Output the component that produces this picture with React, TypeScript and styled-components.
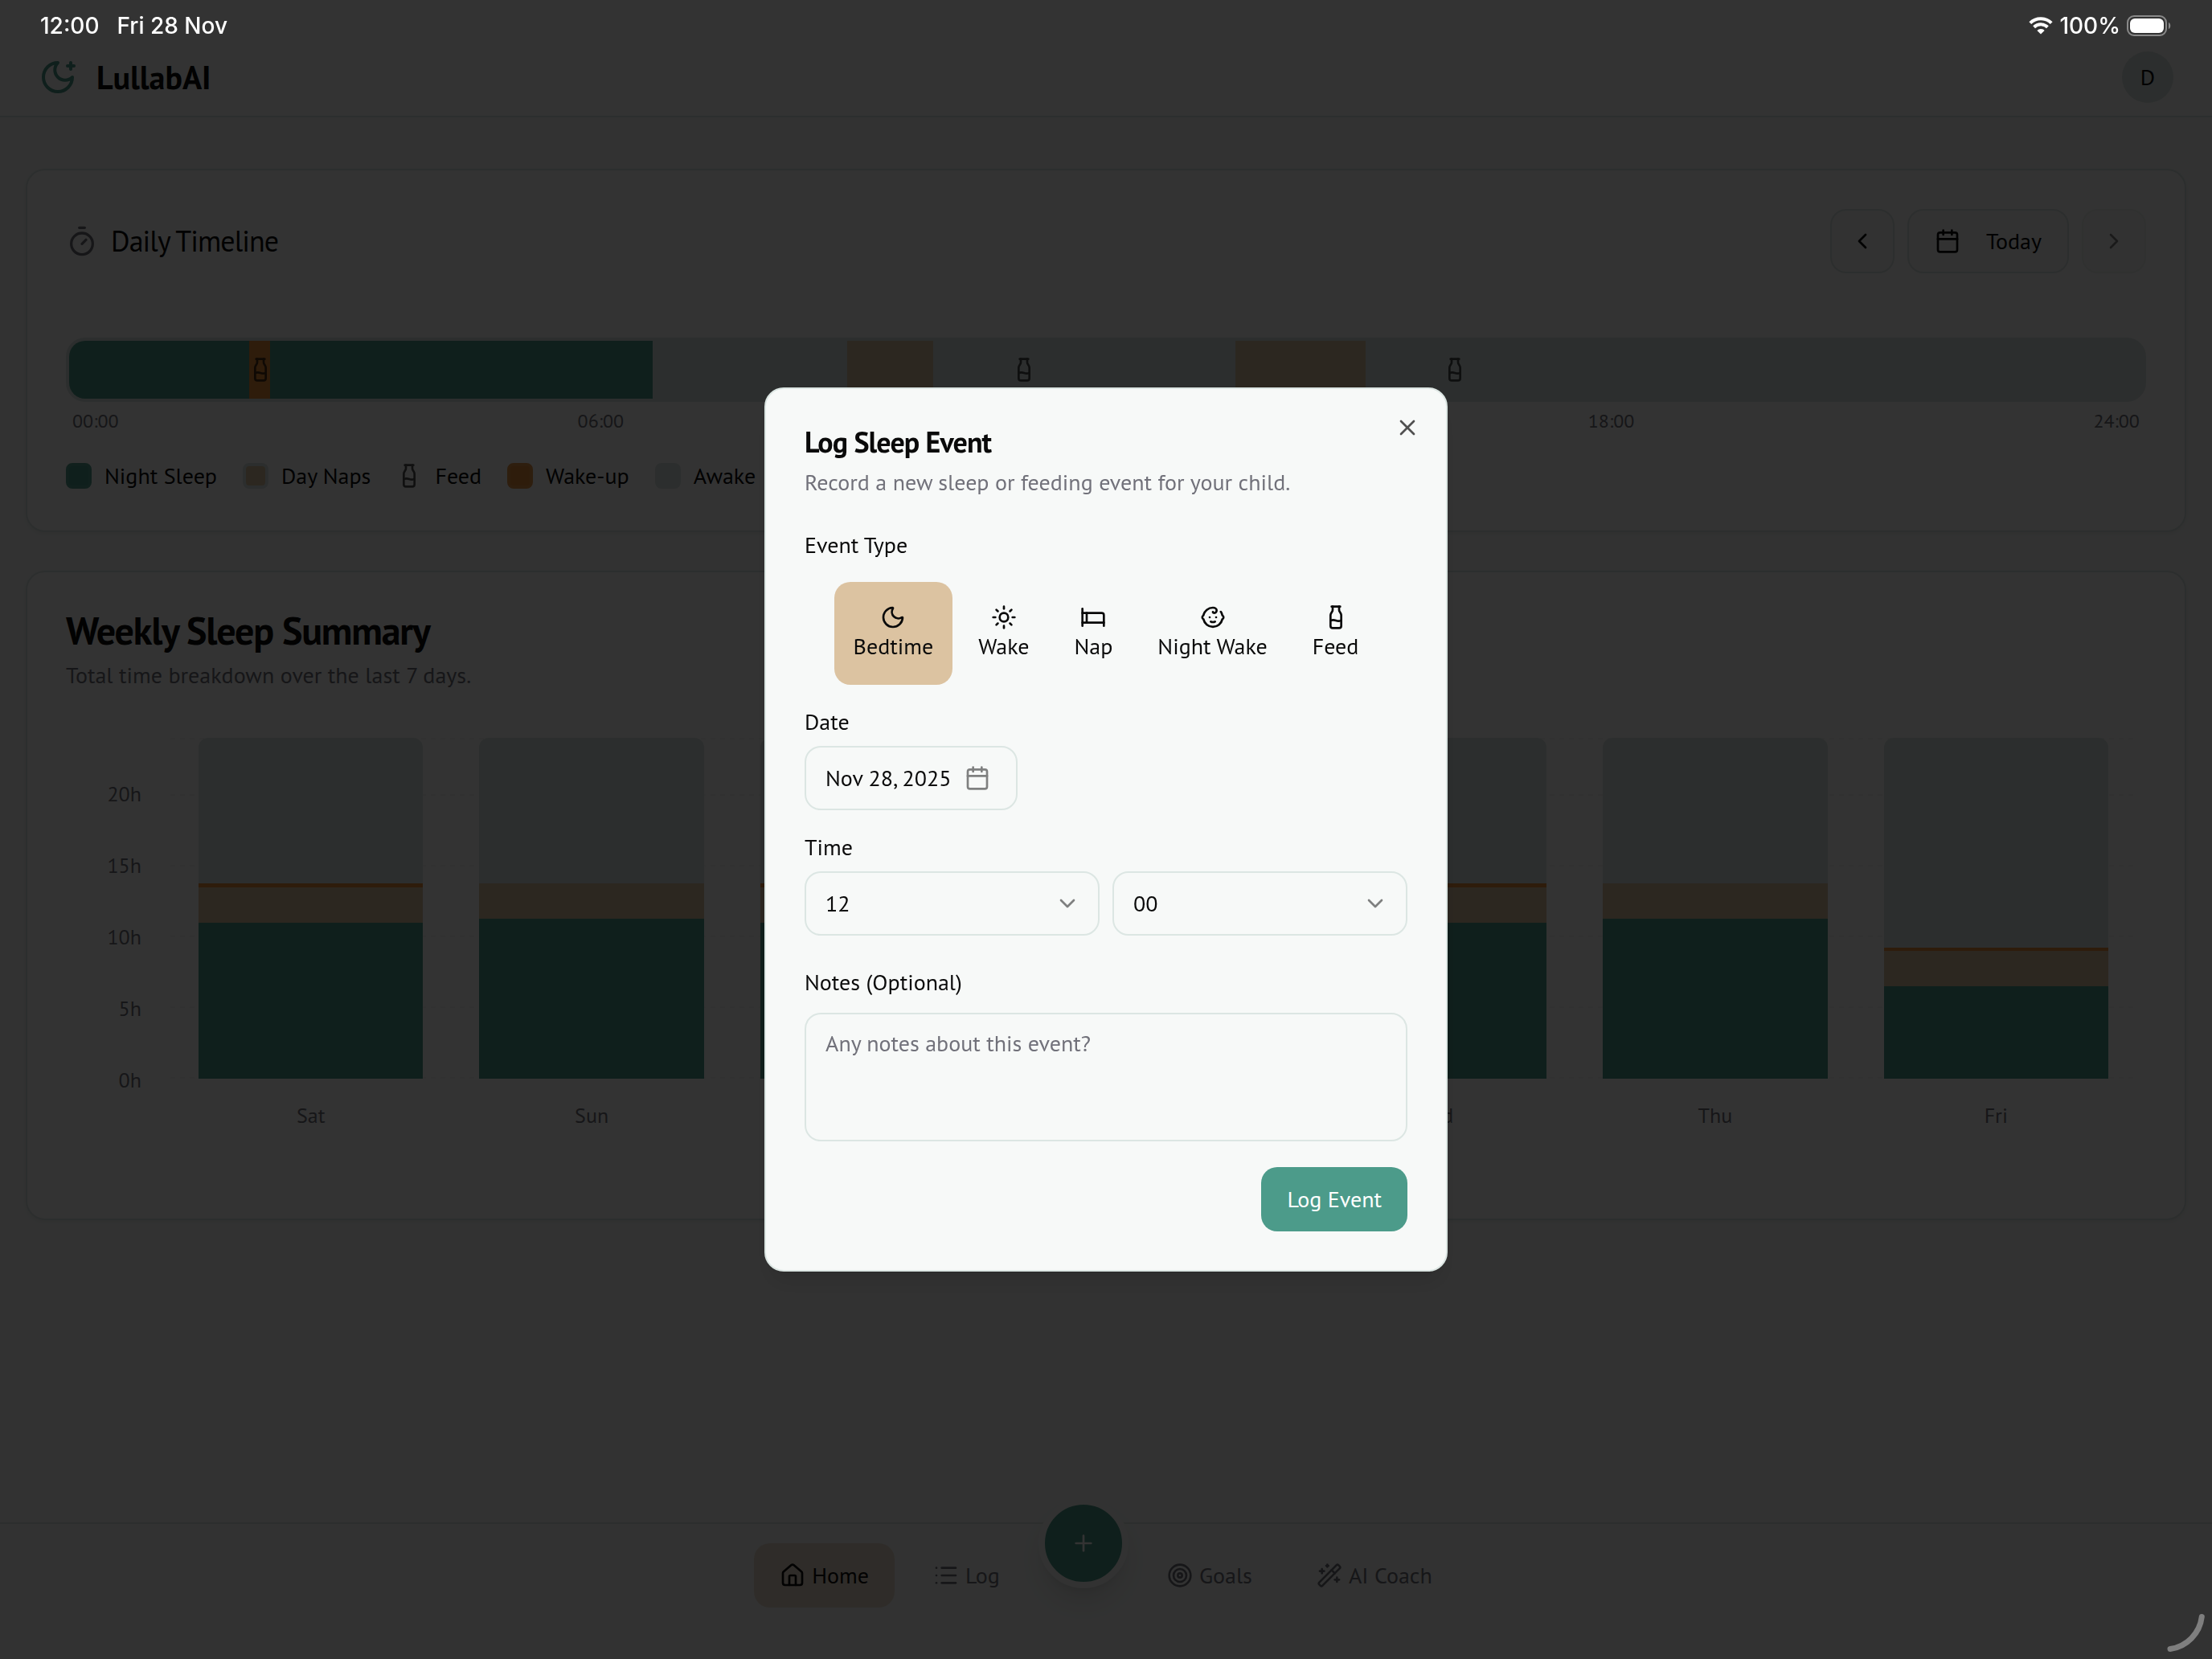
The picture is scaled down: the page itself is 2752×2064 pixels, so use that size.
import React, { useState } from "react";
import styled, { createGlobalStyle, css } from "styled-components";
import {
  Baby,
  BedSingle,
  Calendar,
  ChevronDown,
  ChevronLeft,
  ChevronRight,
  House,
  List,
  Milk,
  Moon,
  Plus,
  Sun,
  Target,
  Timer,
  WandSparkles,
  X,
} from "lucide-react";

const c = {
  page: "#f7f9f8",
  card: "#ffffff",
  ink: "#0a0a0a",
  muted: "#71717a",
  line: "#dce6e3",
  night: "#4c9b8a",
  nightEdge: "#58a291",
  nap: "#dcc3a1",
  wake: "#e68c38",
  wakeEdge: "#e69548",
};

const GlobalStyle = createGlobalStyle`
  *, *::before, *::after { box-sizing: border-box; }
  body { margin: 0; background: ${c.page}; }
  body, button, select, textarea {
    font-family: "PT Sans", Lato, "Noto Sans", sans-serif;
    font-size: 28px;
    line-height: 40px;
    color: ${c.ink};
  }
  button, select, textarea { margin: 0; }
  h1, h2, p { margin: 0; }
  svg { flex: none; display: block; }
`;

const Page = styled.div`
  min-height: 100vh;
  display: flex;
  flex-direction: column;
`;

/* ---------- header ---------- */

const Header = styled.header`
  display: flex;
  align-items: center;
  justify-content: space-between;
  padding: 48px 48px 0;
  height: 146px;
  background: ${c.card};
  border-bottom: 2px solid ${c.line};
`;

const Brand = styled.div`
  display: flex;
  align-items: center;
  gap: 24px;
  color: ${c.night};
`;

const BrandName = styled.h1`
  font-size: 40px;
  line-height: 56px;
  font-weight: 700;
  color: ${c.ink};
`;

const Avatar = styled.button`
  width: 64px;
  height: 64px;
  padding: 0;
  border: 0;
  border-radius: 50%;
  background: ${c.line};
`;

/* ---------- cards ---------- */

const Main = styled.main`
  flex: 1;
  display: flex;
  flex-direction: column;
  gap: 48px;
  padding: 64px 32px;
`;

const Card = styled.section`
  padding: 48px;
  background: ${c.card};
  border: 2px solid ${c.line};
  border-radius: 24px;
  box-shadow: 0 2px 4px rgba(0, 0, 0, 0.05);
`;

const CardBar = styled.div`
  display: flex;
  align-items: center;
  justify-content: space-between;
  margin-bottom: 80px;
`;

const TimelineTitle = styled.h2`
  display: flex;
  align-items: center;
  gap: 16px;
  font-size: 36px;
  line-height: 56px;
  font-weight: 400;
  letter-spacing: -0.025em;

  svg { color: ${c.muted}; }
`;

const DayNav = styled.div`
  display: flex;
  gap: 16px;
`;

const OutlineButton = styled.button<{ $square?: boolean }>`
  display: flex;
  align-items: center;
  justify-content: center;
  gap: 32px;
  height: 80px;
  min-width: 80px;
  padding: ${(p) => (p.$square ? "0" : "0 32px")};
  border: 2px solid ${c.line};
  border-radius: 20px;
  background: ${c.page};

  &:disabled { opacity: 0.5; color: ${c.ink}; }
`;

const Track = styled.div`
  position: relative;
  height: 80px;
  border: 4px solid ${c.line};
  border-radius: 24px;
  background: ${c.line};
  overflow: hidden;
`;

const Segment = styled.div`
  position: absolute;
  top: 0;
  bottom: 0;
  display: flex;
  align-items: center;
  justify-content: center;
`;

const FeedIcon = styled(Milk)`
  opacity: 0.7;
`;

const Hours = styled.div`
  display: flex;
  justify-content: space-between;
  margin-top: 8px;
  padding: 0 8px;
  font-size: 24px;
  line-height: 32px;
  color: ${c.muted};
`;

const Legend = styled.ul`
  display: flex;
  flex-wrap: wrap;
  gap: 32px;
  margin: 32px 0 0;
  padding: 0;
  list-style: none;
`;

const LegendItem = styled.li`
  display: flex;
  align-items: center;
  gap: 16px;
`;

const Swatch = styled.span<{ $fill: string; $edge: string }>`
  width: 32px;
  height: 32px;
  border: 4px solid ${(p) => p.$edge};
  border-radius: 8px;
  background: ${(p) => p.$fill};
`;

/* ---------- weekly chart ---------- */

const SummaryTitle = styled.h2`
  font-size: 48px;
  line-height: 48px;
  font-weight: 700;
  letter-spacing: -0.025em;
`;

const Hint = styled.p`
  margin-top: 12px;
  color: ${c.muted};
`;

const Chart = styled.div`
  display: grid;
  grid-template-columns: 94px 1fr;
  grid-template-rows: 424px 72px;
  column-gap: 36px;
  height: 560px;
  margin-top: 48px;
  padding: 10px 12px 0 0;
  font-size: 26px;
  line-height: 32px;
  color: ${c.muted};
`;

const Ticks = styled.div`
  display: flex;
  flex-direction: column-reverse;
  justify-content: space-between;
  margin: 54px 0 -18px;
  text-align: right;
`;

const Plot = styled.div`
  display: grid;
  grid-template-columns: repeat(7, 1fr);
  background:
    repeating-linear-gradient(90deg, transparent 0 6px, ${c.card} 6px 12px),
    linear-gradient(#f2f6f4 2px, transparent 2px),
    repeating-linear-gradient(0deg, #f2f6f4 0 2px, transparent 2px 88px);
`;

const Column = styled.div`
  display: flex;
  flex-direction: column-reverse;
  width: 80%;
  margin: 0 auto;
  border-radius: 12px 12px 0 0;
  overflow: hidden;
`;

const Slice = styled.div<{ $fill: string }>`
  background: ${(p) => p.$fill};
`;

const Days = styled.div`
  grid-column: 2;
  display: grid;
  grid-template-columns: repeat(7, 1fr);
  padding-top: 30px;
  text-align: center;
`;

/* ---------- bottom navigation ---------- */

const BottomNav = styled.nav`
  position: sticky;
  bottom: 0;
  display: flex;
  justify-content: center;
  gap: 16px;
  padding: 24px 24px 64px;
  border-top: 2px solid ${c.line};
  background: ${c.page};
`;

const NavLink = styled.a<{ $active?: boolean }>`
  display: flex;
  align-items: center;
  gap: 8px;
  height: 80px;
  padding: 0 32px;
  border-radius: 20px;
  color: ${c.muted};
  text-decoration: none;
  ${(p) =>
    p.$active &&
    css`
      color: ${c.ink};
      background: #ebdccb;
    `}
`;

const AddButton = styled.button`
  display: flex;
  align-items: center;
  justify-content: center;
  width: 112px;
  height: 112px;
  margin: -56px 0 24px;
  padding: 0;
  border: 8px solid ${c.page};
  border-radius: 50%;
  background: ${c.night};
  color: #fff;
  box-shadow: 0 20px 30px -6px rgba(0, 0, 0, 0.1), 0 8px 12px -8px rgba(0, 0, 0, 0.1);
`;

/* ---------- system chrome ---------- */

const StatusBar = styled.div`
  position: fixed;
  inset: 0 0 auto;
  z-index: 30;
  display: flex;
  justify-content: space-between;
  align-items: center;
  height: 64px;
  padding: 0 50px;
  font-family: Inter, "Liberation Sans", sans-serif;
  font-size: 28px;
  font-weight: 500;
  line-height: 40px;
  color: #fff;
`;

const StatusGroup = styled.div<{ $gap: number }>`
  display: flex;
  align-items: center;
  gap: ${(p) => p.$gap}px;
`;

const CornerMark = styled.svg`
  position: fixed;
  right: 0;
  bottom: 0;
  z-index: 30;
`;

/* ---------- dialog ---------- */

const Overlay = styled.div`
  position: fixed;
  inset: 0;
  z-index: 20;
  display: flex;
  align-items: center;
  justify-content: center;
  background: rgba(0, 0, 0, 0.8);
`;

const Dialog = styled.form`
  position: relative;
  display: flex;
  flex-direction: column;
  width: 850px;
  padding: 48px;
  background: ${c.page};
  border: 2px solid ${c.line};
  border-radius: 24px;
  box-shadow: 0 20px 30px -6px rgba(0, 0, 0, 0.1), 0 8px 12px -8px rgba(0, 0, 0, 0.1);
`;

const DialogTitle = styled.h2`
  font-size: 36px;
  line-height: 36px;
  font-weight: 700;
  letter-spacing: -0.025em;
`;

const CloseButton = styled.button`
  position: absolute;
  top: 32px;
  right: 32px;
  padding: 0;
  border: 0;
  background: none;
  opacity: 0.7;
`;

const labelText = css`
  display: block;
  padding: 0;
  font-size: 28px;
  line-height: 28px;
`;

const Label = styled.label`
  ${labelText}
`;

const Field = styled.div<{ $top: number; $gap: number }>`
  display: flex;
  flex-direction: column;
  align-items: flex-start;
  gap: ${(p) => p.$gap}px;
  margin-top: ${(p) => p.$top}px;
`;

const GroupLabel = styled.span`
  ${labelText}
`;

const TypeRow = styled.div`
  display: flex;
  align-self: stretch;
  justify-content: center;
  gap: 8px;
`;

const TypeButton = styled.button<{ $on: boolean }>`
  display: flex;
  flex-direction: column;
  align-items: center;
  height: 128px;
  padding: 28px 24px;
  border: 0;
  border-radius: 20px;
  background: ${(p) => (p.$on ? c.nap : "transparent")};
`;

const DateButton = styled.button`
  display: flex;
  align-items: center;
  gap: 16px;
  height: 80px;
  padding: 0 32px 0 24px;
  border: 2px solid ${c.line};
  border-radius: 20px;
  background: ${c.page};

  svg { opacity: 0.5; }
`;

const TimeRow = styled.div`
  display: grid;
  grid-template-columns: 1fr 1fr;
  gap: 16px;
  align-self: stretch;
`;

const SelectBox = styled.div`
  display: grid;
  align-items: center;

  select, svg { grid-area: 1 / 1; }
  svg {
    justify-self: end;
    margin-right: 24px;
    opacity: 0.5;
    pointer-events: none;
  }
`;

const Select = styled.select`
  appearance: none;
  height: 80px;
  padding: 0 24px;
  border: 2px solid ${c.line};
  border-radius: 20px;
  background: ${c.page};
`;

const Notes = styled.textarea`
  display: block;
  align-self: stretch;
  height: 160px;
  padding: 16px 24px;
  border: 2px solid ${c.line};
  border-radius: 20px;
  background: ${c.page};
  resize: none;

  &::placeholder { color: ${c.muted}; opacity: 1; }
`;

const SubmitButton = styled.button`
  align-self: flex-end;
  height: 80px;
  margin-top: 32px;
  padding: 0 32px;
  border: 0;
  border-radius: 20px;
  background: ${c.night};
  color: #fff;
`;

/* ---------- data ---------- */

const segments = [
  { from: 0, to: 6.75, fill: c.night },
  { from: 9, to: 10, fill: c.nap },
  { from: 13.5, to: 15, fill: c.nap },
  { from: 2.08, to: 2.33, fill: c.wake },
];
const feeds = [2.21, 11.05, 16.04];
const hours = ["00:00", "06:00", "12:00", "18:00", "24:00"];

const week = [
  { day: "Sat", night: 11, nap: 2.5, wake: 0.25 },
  { day: "Sun", night: 11.25, nap: 2.5, wake: 0 },
  { day: "Mon", night: 11, nap: 2.5, wake: 0.25 },
  { day: "Tue", night: 11.25, nap: 2.5, wake: 0 },
  { day: "Wed", night: 11, nap: 2.5, wake: 0.25 },
  { day: "Thu", night: 11.25, nap: 2.5, wake: 0 },
  { day: "Fri", night: 6.5, nap: 2.5, wake: 0.25 },
];

const eventTypes = [
  { name: "Bedtime", Icon: Moon },
  { name: "Wake", Icon: Sun },
  { name: "Nap", Icon: BedIcon },
  { name: "Night Wake", Icon: Baby },
  { name: "Feed", Icon: Milk },
];

const dayPercent = (h: number) => `${(h / 24) * 100}%`;

function MoonStarLogo() {
  return (
    <svg width="48" height="48" viewBox="0 0 24 24" fill="none" stroke="currentColor" strokeWidth="2" strokeLinecap="round" strokeLinejoin="round" aria-hidden="true">
      <path d="M12 3a6 6 0 0 0 9 9 9 9 0 1 1-9-9" />
      <path d="M20 3v4" />
      <path d="M22 5h-4" />
    </svg>
  );
}

function BedIcon({ size }: { size: number }) {
  return (
    <svg width={size} height={size} viewBox="0 0 24 24" fill="none" stroke="currentColor" strokeWidth="2" strokeLinecap="round" strokeLinejoin="round" aria-hidden="true">
      <path d="M2 4v16" />
      <path d="M2 8h18a2 2 0 0 1 2 2v10" />
      <path d="M2 17h20" />
      <path d="M6 8v9" />
    </svg>
  );
}

function Status() {
  return (
    <StatusBar>
      <StatusGroup $gap={22}>
        <span>12:00</span>
        <span>Fri 28 Nov</span>
      </StatusGroup>
      <StatusGroup $gap={8}>
        <svg width="30" height="22" viewBox="0 0 30 22" fill="none" stroke="#fff" strokeWidth="4" aria-hidden="true">
          <path d="M1.8 7.6a18.8 18.8 0 0 1 26.4 0" />
          <path d="M6.6 12.8a12 12 0 0 1 16.8 0" />
          <path d="M15 21.5l-4.6-4.6a6.6 6.6 0 0 1 9.2 0z" fill="#fff" stroke="none" />
        </svg>
        <span>100%</span>
        <svg width="56" height="26" viewBox="0 0 56 26" fill="none" aria-hidden="true">
          <rect x="1" y="1" width="48" height="24" rx="8" stroke="#8a8a8a" strokeWidth="2" />
          <rect x="4" y="4" width="42" height="18" rx="6" fill="#fff" />
          <path d="M52 9c3 1 3 7 0 8z" fill="#8a8a8a" />
        </svg>
      </StatusGroup>
    </StatusBar>
  );
}

function Timeline() {
  return (
    <Card>
      <CardBar>
        <TimelineTitle>
          <Timer size={40} />
          Daily Timeline
        </TimelineTitle>
        <DayNav>
          <OutlineButton $square aria-label="Previous day">
            <ChevronLeft size={32} />
          </OutlineButton>
          <OutlineButton>
            <Calendar size={32} />
            Today
          </OutlineButton>
          <OutlineButton $square disabled aria-label="Next day">
            <ChevronRight size={32} />
          </OutlineButton>
        </DayNav>
      </CardBar>
      <Track>
        {segments.map((s) => (
          <Segment key={s.from} style={{ left: dayPercent(s.from), width: dayPercent(s.to - s.from), background: s.fill }} />
        ))}
        {feeds.map((at) => (
          <Segment key={at} style={{ left: dayPercent(at), width: 0 }}>
            <FeedIcon size={32} />
          </Segment>
        ))}
      </Track>
      <Hours>
        {hours.map((h) => (
          <span key={h}>{h}</span>
        ))}
      </Hours>
      <Legend>
        <LegendItem><Swatch $fill={c.night} $edge={c.nightEdge} />Night Sleep</LegendItem>
        <LegendItem><Swatch $fill={c.nap} $edge={c.line} />Day Naps</LegendItem>
        <LegendItem><FeedIcon size={32} />Feed</LegendItem>
        <LegendItem><Swatch $fill={c.wake} $edge={c.wakeEdge} />Wake-up</LegendItem>
        <LegendItem><Swatch $fill={c.line} $edge={c.line} />Awake</LegendItem>
      </Legend>
    </Card>
  );
}

function WeeklySummary() {
  return (
    <Card>
      <SummaryTitle>Weekly Sleep Summary</SummaryTitle>
      <Hint>Total time breakdown over the last 7 days.</Hint>
      <Chart>
        <Ticks>
          {["0h", "5h", "10h", "15h", "20h"].map((t) => (
            <span key={t}>{t}</span>
          ))}
        </Ticks>
        <Plot>
          {week.map((d) => (
            <Column key={d.day}>
              <Slice $fill={c.night} style={{ height: dayPercent(d.night) }} />
              <Slice $fill={c.nap} style={{ height: dayPercent(d.nap) }} />
              <Slice $fill={c.wake} style={{ height: dayPercent(d.wake) }} />
              <Slice $fill={c.line} style={{ height: dayPercent(24 - d.night - d.nap - d.wake) }} />
            </Column>
          ))}
        </Plot>
        <Days>
          {week.map((d) => (
            <span key={d.day}>{d.day}</span>
          ))}
        </Days>
      </Chart>
    </Card>
  );
}

function LogEventDialog() {
  const [type, setType] = useState("Bedtime");
  return (
    <Overlay>
      <Dialog role="dialog" aria-labelledby="dialog-title" onSubmit={(e) => e.preventDefault()}>
        <DialogTitle id="dialog-title">Log Sleep Event</DialogTitle>
        <Hint>Record a new sleep or feeding event for your child.</Hint>
        <CloseButton type="button" aria-label="Close">
          <X size={32} />
        </CloseButton>

        <Field $top={44} $gap={32} role="group" aria-labelledby="type-label">
          <GroupLabel id="type-label">Event Type</GroupLabel>
          <TypeRow>
            {eventTypes.map(({ name, Icon }) => (
              <TypeButton key={name} type="button" $on={type === name} aria-pressed={type === name} onClick={() => setType(name)}>
                <Icon size={32} />
                {name}
              </TypeButton>
            ))}
          </TypeRow>
        </Field>

        <Field $top={32} $gap={16}>
          <Label htmlFor="date">Date</Label>
          <DateButton id="date" type="button">
            Nov 28, 2025
            <Calendar size={32} />
          </DateButton>
        </Field>

        <Field $top={32} $gap={16}>
          <Label htmlFor="hour">Time</Label>
          <TimeRow>
            <SelectBox>
              <Select id="hour" defaultValue="12">
                {["11", "12", "13"].map((h) => <option key={h}>{h}</option>)}
              </Select>
              <ChevronDown size={32} />
            </SelectBox>
            <SelectBox>
              <Select aria-label="Minutes" defaultValue="00">
                {["00", "15", "30", "45"].map((m) => <option key={m}>{m}</option>)}
              </Select>
              <ChevronDown size={32} />
            </SelectBox>
          </TimeRow>
        </Field>

        <Field $top={44} $gap={24}>
          <Label htmlFor="notes">Notes (Optional)</Label>
          <Notes id="notes" placeholder="Any notes about this event?" />
        </Field>

        <SubmitButton type="submit">Log Event</SubmitButton>
      </Dialog>
    </Overlay>
  );
}

export default function App() {
  return (
    <Page>
      <GlobalStyle />
      <Header>
        <Brand>
          <MoonStarLogo />
          <BrandName>LullabAI</BrandName>
        </Brand>
        <Avatar aria-label="Account">D</Avatar>
      </Header>
      <Main>
        <Timeline />
        <WeeklySummary />
      </Main>
      <BottomNav>
        <NavLink href="#home" $active><House size={32} />Home</NavLink>
        <NavLink href="#log"><List size={32} />Log</NavLink>
        <AddButton aria-label="Log event"><Plus size={32} /></AddButton>
        <NavLink href="#goals"><Target size={32} />Goals</NavLink>
        <NavLink href="#coach"><WandSparkles size={32} />AI Coach</NavLink>
      </BottomNav>
      <LogEventDialog />
      <Status />
      <CornerMark width="64" height="64" viewBox="0 0 64 64" fill="none" aria-hidden="true">
        <path d="M51.3 11.5A46 46 0 0 1 12 51.5" stroke="#7f7f7f" strokeWidth="7" strokeLinecap="round" />
      </CornerMark>
    </Page>
  );
}
